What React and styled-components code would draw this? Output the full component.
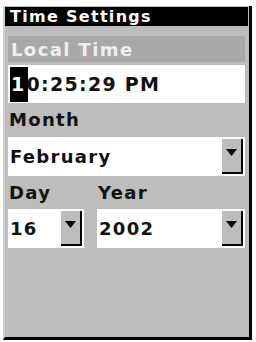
import React from 'react';
import styled, { createGlobalStyle } from 'styled-components';

const GlobalStyle = createGlobalStyle`
    html, body {
        margin: 0;
        padding: 0;
        background: #fff;
    }
`;

const Screen = styled.div`
    box-sizing: border-box;
    margin: 6px 0 0 3px;
    width: 249px;
    height: 334px;
    background: #bdbdbd;
    border-left: 2px solid #cfcfcf;
    border-right: 3px solid #000;
    border-bottom: 3px solid #000;
    font-family: "DejaVu Sans", Verdana, sans-serif;
    font-weight: bold;
    display: flex;
    flex-direction: column;
`;

const TitleBar = styled.div`
    height: 19px;
    margin: 1px 1px 0 0;
    padding-left: 5px;
    background: #000;
    color: #fff;
    font-size: 16px;
    line-height: 20px;
    letter-spacing: 1.3px;
`;

const Section = styled.div`
    margin: 10px 4px 0 3px;
    height: 26px;
    padding-left: 3px;
    background: #a8a8a8;
    color: #efefef;
    font-size: 18px;
    line-height: 27px;
    letter-spacing: 1.4px;
`;

const Label = styled.div`
    height: ${p => p.h || 34}px;
    padding-left: 1px;
    color: #111;
    font-size: 18px;
    line-height: ${p => p.h || 34}px;
    letter-spacing: 1.3px;
`;

const Body = styled.div`
    margin: 0 4px 0 3px;
`;

const Field = styled.div`
    height: ${p => p.h || 39}px;
    margin-top: ${p => p.mt || 0}px;
    background: #fff;
    display: flex;
    align-items: center;
    color: #111;
    font-size: ${p => p.size || 18}px;
    letter-spacing: 1.3px;
    padding-left: 2px;
`;

const Value = styled.span`
    flex: 1;
`;

const Cursor = styled.span`
    display: inline-flex;
    align-items: center;
    height: 35px;
    padding: 0 2px 0 1px;
    margin-right: -1px;
    background: #000;
    color: #fff;
`;

const DropButton = styled.div`
    box-sizing: border-box;
    width: 21px;
    height: 35px;
    margin: 0 2px 2px 0;
    align-self: flex-end;
    background: #bdbdbd;
    border-right: 2px solid #000;
    border-bottom: 2px solid #000;
    display: flex;
    align-items: center;
    justify-content: center;
    padding-bottom: 6px;
`;

const Row = styled.div`
    display: grid;
    grid-template-columns: 76px 1fr;
    column-gap: 13px;
`;

const Arrow = () => (
    <svg width="11" height="7" viewBox="0 0 11 7">
        <polygon points="0,0 11,0 5.5,7" fill="#000" />
    </svg>
);

const Select = ({ value }) => (
    <Field>
        <Value>{value}</Value>
        <DropButton><Arrow /></DropButton>
    </Field>
);

export default function App() {
    return (
        <>
            <GlobalStyle />
            <Screen>
                <TitleBar>Time Settings</TitleBar>
                <Section>Local Time</Section>
                <Body>
                    <Field h={38} mt={3} size={19}>
                        <Cursor>1</Cursor>0:25:29 PM
                    </Field>
                    <Label>Month</Label>
                    <Select value="February" />
                    <Row>
                        <Label h={33}>Day</Label>
                        <Label h={33}>Year</Label>
                        <Select value="16" />
                        <Select value="2002" />
                    </Row>
                </Body>
            </Screen>
        </>
    );
}
